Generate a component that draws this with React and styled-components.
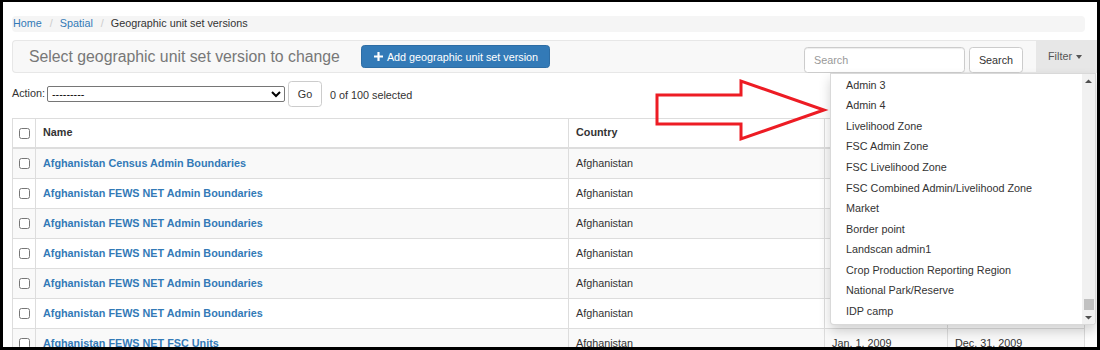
import React from 'react';
import styled, { createGlobalStyle } from 'styled-components';

const GlobalStyle = createGlobalStyle`
  html, body {
    margin: 0;
    padding: 0;
  }
  body {
    font-family: "Liberation Sans", Arial, sans-serif;
    font-size: 10.8px;
    line-height: 1.42857;
    color: #333;
  }
`;

const filterOptions = [
  "Admin 3",
  "Admin 4",
  "Livelihood Zone",
  "FSC Admin Zone",
  "FSC Livelihood Zone",
  "FSC Combined Admin/Livelihood Zone",
  "Market",
  "Border point",
  "Landscan admin1",
  "Crop Production Reporting Region",
  "National Park/Reserve",
  "IDP camp"
];

const rows = [
  { name: "Afghanistan Census Admin Boundaries", country: "Afghanistan", start: "Jan. 1, 2006", end: "Dec. 31, 2006" },
  { name: "Afghanistan FEWS NET Admin Boundaries", country: "Afghanistan", start: "Jan. 1, 2008", end: "Dec. 31, 2008" },
  { name: "Afghanistan FEWS NET Admin Boundaries", country: "Afghanistan", start: "Jan. 1, 2009", end: "Dec. 31, 2009" },
  { name: "Afghanistan FEWS NET Admin Boundaries", country: "Afghanistan", start: "Jan. 1, 2010", end: "Dec. 31, 2010" },
  { name: "Afghanistan FEWS NET Admin Boundaries", country: "Afghanistan", start: "Jan. 1, 2011", end: "Dec. 31, 2011" },
  { name: "Afghanistan FEWS NET Admin Boundaries", country: "Afghanistan", start: "Jan. 1, 2012", end: "Dec. 31, 2012" },
  { name: "Afghanistan FEWS NET FSC Units", country: "Afghanistan", start: "Jan. 1, 2009", end: "Dec. 31, 2009" }
];

const App = () => (
  <Shell>
    <GlobalStyle />
    <Page>
      <Content>
        <Breadcrumb>
          <Crumb link>Home</Crumb>
          <Crumb link>Spatial</Crumb>
          <Crumb>Geographic unit set versions</Crumb>
        </Breadcrumb>

        <Navbar>
          <Title>Select geographic unit set version to change</Title>
          <AddButton>
            <PlusIcon viewBox="0 0 10 10">
              <path d="M3.8 0h2.4v3.8H10v2.4H6.2V10H3.8V6.2H0V3.8h3.8z" fill="#fff" />
            </PlusIcon>
            Add geographic unit set version
          </AddButton>
          <Spacer />
          <SearchForm>
            <SearchInput placeholder="Search" />
            <SearchButton>Search</SearchButton>
          </SearchForm>
          <FilterItem>
            Filter<Caret />
            <Dropdown>
              <MenuList>
                {filterOptions.map((o, i) => (
                  <MenuItem key={i}>{o}</MenuItem>
                ))}
              </MenuList>
              <ScrollTrack>
                <ScrollArrow>
                  <svg width="7" height="4" viewBox="0 0 7 4">
                    <path d="M0 4L3.5 0.5L7 4z" fill="#505050" />
                  </svg>
                </ScrollArrow>
                <ScrollSpace />
                <Thumb />
                <ScrollArrow>
                  <svg width="7" height="4" viewBox="0 0 7 4">
                    <path d="M0 0L3.5 3.5L7 0z" fill="#505050" />
                  </svg>
                </ScrollArrow>
              </ScrollTrack>
            </Dropdown>
          </FilterItem>
        </Navbar>

        <ActionBar>
          <label>Action:</label>
          <ActionSelect defaultValue="">
            <option value="">---------</option>
          </ActionSelect>
          <GoButton>Go</GoButton>
          <Counter>0 of 100 selected</Counter>
        </ActionBar>

        <Table>
          <colgroup>
            <col style={{ width: 23 }} />
            <col style={{ width: 533 }} />
            <col style={{ width: 256 }} />
            <col style={{ width: 123 }} />
            <col style={{ width: 137 }} />
          </colgroup>
          <thead>
            <tr>
              <Th><Check type="checkbox" /></Th>
              <Th>Name</Th>
              <Th>Country</Th>
              <Th>Start date</Th>
              <Th>End date</Th>
            </tr>
          </thead>
          <tbody>
            {rows.map((r, i) => (
              <Tr key={i} striped={i % 2 === 0}>
                <Td><Check type="checkbox" /></Td>
                <Td><NameLink>{r.name}</NameLink></Td>
                <Td>{r.country}</Td>
                <Td>{r.start}</Td>
                <Td>{r.end}</Td>
              </Tr>
            ))}
          </tbody>
        </Table>
      </Content>

      <Arrow width="176" height="66" viewBox="0 0 176 66">
        <polygon
          points="4,18 88,18 88,4 171,33 88,62 88,47 4,47"
          fill="none"
          stroke="#ed1c24"
          strokeWidth="3"
        />
      </Arrow>
    </Page>
  </Shell>
);

const Shell = styled.div`
  width: 1100px;
  height: 350px;
  box-sizing: border-box;
  padding: 2px 3px 3px 3px;
  background: #000;
`;

const Page = styled.div`
  position: relative;
  height: 100%;
  background: #fff;
  overflow: hidden;
`;

const Content = styled.div`
  padding: 14px 12px 0 9px;
`;

const Breadcrumb = styled.ol`
  display: flex;
  align-items: center;
  height: 16px;
  margin: 0;
  padding: 0 1px;
  list-style: none;
  background: #f5f5f5;
  border-radius: 4px;
`;

const Crumb = styled.li`
  color: ${props => props.link ? '#337ab7' : '#333'};
  &:not(:first-child)::before {
    content: "/";
    color: #ccc;
    padding: 0 7px 0 8px;
  }
`;

const Navbar = styled.div`
  display: flex;
  align-items: center;
  height: 33px;
  box-sizing: border-box;
  margin: 8px -12px 0 0;
  background: #f8f8f8;
  border: 1px solid #e7e7e7;
  border-right: none;
  border-radius: 4px 0 0 4px;
`;

const Title = styled.h1`
  margin: 0 0 0 16px;
  font-size: 15.8px;
  font-weight: normal;
  line-height: 1;
  color: #777;
`;

const AddButton = styled.button`
  display: inline-flex;
  align-items: center;
  gap: 4px;
  height: 23px;
  margin-left: 21px;
  padding: 0 11px 0 12px;
  background: #337ab7;
  border: 1px solid #2e6da4;
  border-radius: 3.6px;
  color: #fff;
  font-family: inherit;
  font-size: 10.8px;
`;

const PlusIcon = styled.svg`
  width: 9px;
  height: 9px;
`;

const Spacer = styled.div`
  flex: 1;
`;

const SearchForm = styled.div`
  display: flex;
  gap: 4px;
  align-self: flex-start;
  margin-top: 6px;
`;

const SearchInput = styled.input`
  width: 161px;
  height: 26px;
  box-sizing: border-box;
  padding: 0 9px;
  border: 1px solid #ccc;
  border-radius: 3.6px;
  font-family: inherit;
  font-size: 10.8px;
  color: #555;
  box-shadow: inset 0 1px 1px rgba(0, 0, 0, .075);
  &::placeholder {
    color: #999;
  }
`;

const SearchButton = styled.button`
  width: 54px;
  height: 26px;
  padding: 0;
  background: #fff;
  border: 1px solid #ccc;
  border-radius: 3.6px;
  color: #333;
  font-family: inherit;
  font-size: 10.8px;
`;

const FilterItem = styled.div`
  position: relative;
  align-self: stretch;
  display: flex;
  align-items: center;
  margin-left: 13px;
  padding: 0 15px 0 12px;
  background: #e7e7e7;
  color: #555;
`;

const Caret = styled.span`
  display: inline-block;
  margin-left: 4px;
  border-top: 4px solid #555;
  border-left: 3.5px solid transparent;
  border-right: 3.5px solid transparent;
`;

const Dropdown = styled.div`
  position: absolute;
  top: calc(100% + 1px);
  right: 1px;
  z-index: 10;
  display: flex;
  width: 266px;
  height: 252px;
  box-sizing: border-box;
  background: #fff;
  border: 1px solid rgba(0, 0, 0, .15);
  border-radius: 0 0 4px 4px;
  box-shadow: 0 6px 12px rgba(0, 0, 0, .175);
  overflow: hidden;
`;

const MenuList = styled.ul`
  flex: 1;
  margin: 0;
  padding: 1px 0 0;
  list-style: none;
`;

const MenuItem = styled.li`
  padding: 2.7px 15px;
  line-height: 15.2px;
  color: #333;
  white-space: nowrap;
`;

const ScrollTrack = styled.div`
  display: flex;
  flex-direction: column;
  align-items: center;
  width: 13px;
  background: #f1f1f1;
`;

const ScrollArrow = styled.div`
  display: flex;
  align-items: center;
  justify-content: center;
  height: 13px;
`;

const ScrollSpace = styled.div`
  flex: 1;
`;

const Thumb = styled.div`
  width: 10px;
  height: 11px;
  margin-bottom: 1px;
  background: #c1c1c1;
`;

const ActionBar = styled.div`
  display: flex;
  align-items: center;
  height: 26px;
  margin-top: 8px;
`;

const ActionSelect = styled.select`
  width: 238px;
  height: 16px;
  margin: 0 3px 0 2px;
  padding: 0;
  border: 1px solid #767676;
  border-radius: 2px;
  background: #fff;
  font-family: inherit;
  font-size: 10.8px;
  color: #000;
`;

const GoButton = styled.button`
  width: 34px;
  height: 26px;
  padding: 0;
  background: #fff;
  border: 1px solid #ccc;
  border-radius: 3.6px;
  color: #333;
  font-family: inherit;
  font-size: 10.8px;
`;

const Counter = styled.span`
  margin-left: 8px;
  padding-top: 3px;
`;

const Table = styled.table`
  width: 1072px;
  margin-top: 11px;
  table-layout: fixed;
  border-collapse: collapse;
  border: 1px solid #ddd;
`;

const Th = styled.th`
  height: 28px;
  padding: 0 7px;
  text-align: left;
  border: 1px solid #ddd;
  border-bottom-width: 2px;
  &:first-child {
    padding-left: 6px;
  }
`;

const Tr = styled.tr`
  background: ${props => props.striped ? '#f9f9f9' : '#fff'};
`;

const Td = styled.td`
  height: 29px;
  padding: 0 7px;
  border: 1px solid #ddd;
  white-space: nowrap;
  &:first-child {
    padding-left: 6px;
  }
`;

const Check = styled.input`
  display: block;
  width: 11px;
  height: 11px;
  margin: 0;
`;

const NameLink = styled.a`
  color: #337ab7;
  font-weight: bold;
  text-decoration: none;
`;

const Arrow = styled.svg`
  position: absolute;
  left: 650px;
  top: 75px;
`;

export default App;
